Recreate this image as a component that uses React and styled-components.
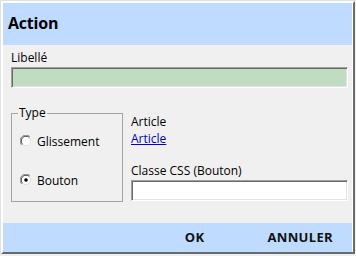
import React, { useState } from 'react';
import styled, { createGlobalStyle } from 'styled-components';

const GlobalStyle = createGlobalStyle`
  html, body {
    margin: 0;
    padding: 0;
    background: #f0f0f0;
  }
  body {
    font-family: "Open Sans", "Noto Sans", sans-serif;
    font-size: 12px;
    color: #000;
  }
`;

// cadre extérieur (1px clair) puis le relief de la fenêtre
const Frame = styled.div`
  width: 356px;
  height: 256px;
  box-sizing: border-box;
  border-style: solid;
  border-width: 1px 1px 2px 1px;
  border-color: #e1e1e1 #f0f0f0 #f0f0f0 #e1e1e1;
`;

const Window = styled.div`
  height: 100%;
  box-sizing: border-box;
  display: flex;
  flex-direction: column;
  border: 2px solid;
  border-color: #fff #6a6a6a #6a6a6a #fff;
  box-shadow: inset -1px -1px 0 #fff;
  background: #f0f0f0;
`;

const Header = styled.div`
  height: 40px;
  border-bottom: 2px solid #c7dcf8;
  background: #bfdbff;
  display: flex;
  align-items: center;
  padding-left: 5px;
  margin-right: 1px;
  font-weight: 700;
  font-size: 16px;
  letter-spacing: -0.2px;
`;

const Body = styled.div`
  flex: 1;
  padding: 5px 5px 0 8px;
`;

const Label = styled.div`
  line-height: 16px;
  margin-bottom: 1px;
  white-space: nowrap;
`;

const Field = styled.div`
  height: 21px;
  box-sizing: border-box;
  border-style: solid;
  border-width: 1px;
  border-color: #a0a0a0 #fff #fff #a0a0a0;
  box-shadow: inset 1px 1px 0 #696969, inset -1px -1px 0 #e3e3e3;
  background: ${p => (p.$green ? '#c2dcc2' : '#fff')};
`;

const Row = styled.div`
  display: flex;
  margin-top: 19px;
`;

const Group = styled.fieldset`
  width: 112px;
  box-sizing: border-box;
  margin: 0;
  padding: 0 0 13px 0;
  border: 1px solid #a4a4a4;
`;

const Legend = styled.legend`
  margin-left: 6px;
  padding: 0 1px;
  line-height: 12px;
`;

const RadioRow = styled.label`
  display: flex;
  align-items: center;
  gap: 5px;
  height: 16px;
  padding-left: 8px;
  margin-top: ${p => p.$top}px;
`;

const Side = styled.div`
  flex: 1;
  margin-left: 8px;
  padding-top: 7px;
`;

const Link = styled.a`
  display: block;
  line-height: 16px;
  color: #0000cc;
  text-decoration: underline;
  margin-bottom: 16px;
`;

const Footer = styled.div`
  height: 29px;
  margin-right: 1px;
  background: #bfdbff;
  display: flex;
  justify-content: flex-end;
  align-items: center;
  gap: 63px;
  padding-right: 19px;
`;

const Button = styled.div`
  font-weight: 700;
  font-size: 13px;
  letter-spacing: 0.35px;
  line-height: 16px;
  padding-bottom: 1px;
  color: #111;
`;

function Radio({ checked }) {
  return (
    <svg width="12" height="12" viewBox="0 0 12 12">
      <circle cx="6" cy="6" r="5.5" fill="#fff" />
      <path d="M10.2 1.8 A5.5 5.5 0 0 0 1.8 10.2" fill="none" stroke="#8a8a8a" strokeWidth="1" />
      <path d="M9.4 2.6 A4.4 4.4 0 0 0 2.6 9.4" fill="none" stroke="#404040" strokeWidth="1" />
      <path d="M1.8 10.2 A5.5 5.5 0 0 0 10.2 1.8" fill="none" stroke="#f4f4f4" strokeWidth="1" />
      <path d="M2.6 9.4 A4.4 4.4 0 0 0 9.4 2.6" fill="none" stroke="#dcdcdc" strokeWidth="1" />
      {checked && <circle cx="6" cy="6" r="1.8" fill="#000" />}
    </svg>
  );
}

export default function App() {
  const [type, setType] = useState('bouton');
  return (
    <>
      <GlobalStyle />
      <Frame>
        <Window>
          <Header>Action</Header>
          <Body>
            <Label>Libellé</Label>
            <Field $green />
            <Row>
              <Group>
                <Legend>Type</Legend>
                <RadioRow $top={14} onClick={() => setType('glissement')}>
                  <Radio checked={type === 'glissement'} />
                  Glissement
                </RadioRow>
                <RadioRow $top={23} onClick={() => setType('bouton')}>
                  <Radio checked={type === 'bouton'} />
                  Bouton
                </RadioRow>
              </Group>
              <Side>
                <Label>Article</Label>
                <Link href="#">Article</Link>
                <Label>Classe CSS (Bouton)</Label>
                <Field />
              </Side>
            </Row>
          </Body>
          <Footer>
            <Button>OK</Button>
            <Button>ANNULER</Button>
          </Footer>
        </Window>
      </Frame>
    </>
  );
}
